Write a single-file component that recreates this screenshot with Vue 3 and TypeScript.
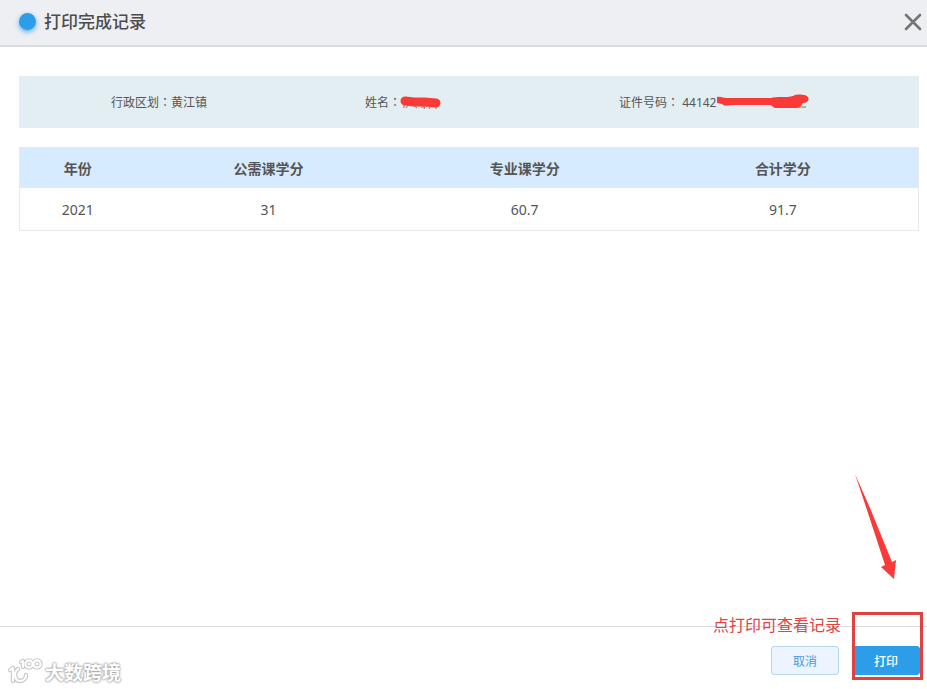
<script setup lang="ts">
interface CreditRow {
  year: string
  common: string
  major: string
  total: string
}

const region = '黄江镇'
const idPrefix = '44142'
const columns: string[] = ['年份', '公需课学分', '专业课学分', '合计学分']
const rows: CreditRow[] = [{ year: '2021', common: '31', major: '60.7', total: '91.7' }]

function printRecord(): void {
  window.print()
}
</script>

<template>
  <div class="dialog" role="dialog" aria-labelledby="dialog-title">
    <header class="header">
      <span class="dot"></span>
      <h1 id="dialog-title" class="title">打印完成记录</h1>
      <button class="close" type="button" aria-label="关闭">
        <svg width="18" height="18" viewBox="0 0 18 18">
          <path d="M2 2L16 16M16 2L2 16" fill="none" stroke="#757575" stroke-width="2.6" stroke-linecap="round" />
        </svg>
      </button>
    </header>

    <main class="body">
      <section class="info">
        <div class="field">行政区划<span class="colon">：</span>{{ region }}</div>
        <div class="field">
          姓名<span class="colon">：</span>
          <svg class="mask mask-name" width="42" height="14" viewBox="0 0 42 14">
            <path d="M4 8v4M8 9l-2 3M14 10l3 2M21 11h4l-1 2M31 10l-2 3M36 10v3" fill="none" stroke="#777" stroke-width="1" />
            <path d="M5 5L14 6L24 6L36 7" fill="none" stroke="#fb3a38" stroke-width="9" stroke-linecap="round" stroke-linejoin="round" />
          </svg>
        </div>
        <div class="field">
          证件号码<span class="colon">：</span> {{ idPrefix }}
          <svg class="mask mask-id" width="96" height="18" viewBox="0 0 96 18">
            <path d="M84 13h7" fill="none" stroke="#777" stroke-width="1" />
            <path d="M2 3C6 2 8 4 12 4L56 4C60 2 72 4 78 2C82 0 90 0 93 3C95 7 91 9 88 9C86 11 86 14 82 14L61 14C57 14 58 11 55 11L15 11C11 12 9 12 7 10L2 9Z" fill="#fb3a38" />
          </svg>
        </div>
      </section>

      <table class="records">
        <colgroup>
          <col class="col-year" />
          <col class="col-credit" />
          <col class="col-credit" />
          <col />
        </colgroup>
        <thead>
          <tr>
            <th v-for="column in columns" :key="column" scope="col">{{ column }}</th>
          </tr>
        </thead>
        <tbody>
          <tr v-for="row in rows" :key="row.year">
            <td>{{ row.year }}</td>
            <td>{{ row.common }}</td>
            <td>{{ row.major }}</td>
            <td>{{ row.total }}</td>
          </tr>
        </tbody>
      </table>
    </main>

    <footer class="footer">
      <div class="watermark">
        <svg width="36" height="28" viewBox="0 0 36 28" fill="none" stroke-linecap="round" stroke-linejoin="round">
          <g stroke="#c8c8c8" stroke-width="4.4">
            <path d="M3 11L6 9V22M11 10C6 14 8 22 13 22C17 22 19 19 19 16M14 3L16 2V8" />
            <circle cx="22" cy="5" r="3.6" /><circle cx="30" cy="5" r="3.6" />
          </g>
          <g stroke="#fff" stroke-width="2.2">
            <path d="M3 11L6 9V22M11 10C6 14 8 22 13 22C17 22 19 19 19 16M14 3L16 2V8" />
            <circle cx="22" cy="5" r="3.6" /><circle cx="30" cy="5" r="3.6" />
          </g>
        </svg>
        <span>大数跨境</span>
      </div>
      <span class="note">点打印可查看记录</span>
      <button class="btn cancel" type="button">取消</button>
      <div class="print-wrap">
        <button class="btn print" type="button" @click="printRecord">打印</button>
        <span class="frame"></span>
        <svg class="arrow" width="44" height="106" viewBox="0 0 44 106">
          <path d="M1 0L16 34L38 88L42 86L40 105L27 93L31 91L13 36Z" fill="#f93a38" />
        </svg>
      </div>
    </footer>
  </div>
</template>

<style>
body {
  margin: 0;
  background: #fff;
}
</style>

<style scoped>
.dialog {
  display: flex;
  flex-direction: column;
  min-height: 100vh;
  color: #555;
  font-family: "Noto Sans", "Noto Sans CJK SC", sans-serif;
  font-size: 12px;
}

.header {
  display: flex;
  align-items: center;
  box-sizing: border-box;
  height: 47px;
  padding: 0 5px 2px 19px;
  background: #eeeff3;
  border-bottom: 2px solid #dadbdd;
}

.dot {
  width: 17px;
  height: 17px;
  border-radius: 50%;
  background: #2b9de9;
  box-shadow: 0 2px 5px rgba(43, 157, 233, 0.8);
}

.title {
  flex: 1;
  margin: 0 0 0 8px;
  font-size: 17px;
  line-height: 24px;
  font-weight: 500;
  color: #4c4c4c;
}

.close {
  display: flex;
  padding: 0;
  border: 0;
  background: none;
  cursor: pointer;
}

.body {
  flex: 1;
  padding: 29px 8px 20px 19px;
}

.info {
  display: grid;
  grid-template-columns: repeat(3, 1fr);
  align-items: center;
  box-sizing: border-box;
  height: 52px;
  margin-bottom: 19px;
  padding: 0 46px 0 92px;
  background: #e3eef3;
}

.field {
  position: relative;
  line-height: 20px;
  white-space: nowrap;
}

.colon {
  font-family: "Noto Sans CJK TC", sans-serif;
}

.mask {
  position: absolute;
}

.mask-name {
  left: 35px;
  top: 4px;
}

.mask-id {
  left: 96px;
  top: 2px;
}

.records {
  width: 100%;
  table-layout: fixed;
  border-collapse: collapse;
  border: 1px solid #e3ebee;
  font-size: 14px;
  line-height: 20px;
}

.records th,
.records td {
  box-sizing: border-box;
  padding: 1px 10px 0 0;
  text-align: center;
}

.records th {
  height: 40px;
  padding-top: 3px;
  background: #d7ebfe;
  border-bottom: 1px solid #e1ecf2;
  font-weight: 600;
}

.records td {
  height: 43px;
}

.col-year {
  width: 14%;
}

.col-credit {
  width: 28.5%;
}

.footer {
  position: relative;
  display: flex;
  justify-content: flex-end;
  gap: 13px;
  padding: 19px 7px 14px;
  border-top: 1px solid #dcdcdc;
}

.btn {
  box-sizing: border-box;
  width: 68px;
  height: 29px;
  padding: 0;
  border: 1px solid #b5d5f4;
  border-radius: 3px;
  font-family: inherit;
  font-size: 12px;
  cursor: pointer;
}

.cancel {
  background: #ebf4ff;
  color: #4f98e0;
}

.print {
  display: block;
  border-color: #2b9de9;
  background: #2b9de9;
  color: #fff;
  font-weight: 500;
}

.print-wrap {
  position: relative;
}

.frame {
  position: absolute;
  inset: -34px -3px -5px 0;
  border: 3px solid #e24142;
  pointer-events: none;
}

.arrow {
  position: absolute;
  left: 2px;
  bottom: 95px;
}

.note {
  position: absolute;
  right: 86px;
  top: -14px;
  color: #e04444;
  font-size: 16px;
  line-height: 24px;
}

.watermark {
  position: absolute;
  left: 7px;
  bottom: 2px;
  display: flex;
  align-items: center;
  gap: 2px;
  color: #fff;
  font-size: 19px;
  line-height: 28px;
  font-weight: 700;
  text-shadow: 0 0 2px #999, 0 0 2px #aaa, 0 0 3px #bbb;
}

.watermark svg {
  overflow: visible;
}
</style>
